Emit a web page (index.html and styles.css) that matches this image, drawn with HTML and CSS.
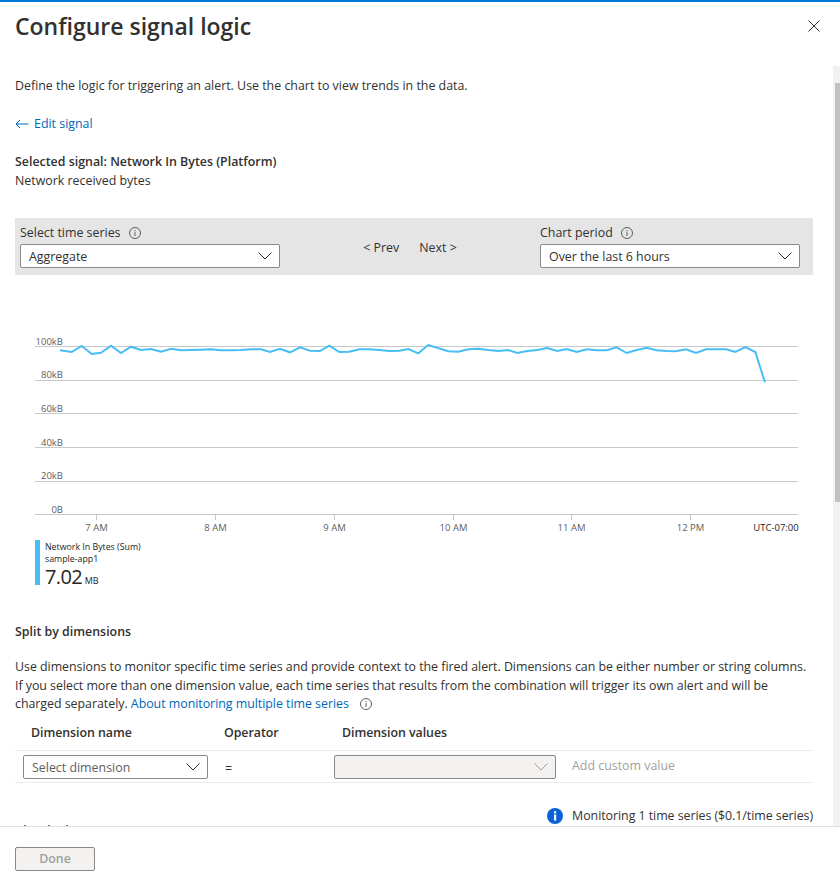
FILE: index.html
```html
<!DOCTYPE html>
<html lang="en">
<head>
    <meta charset="UTF-8">
    <meta name="viewport" content="width=device-width, initial-scale=1.0">
    <title>Configure signal logic</title>
    <link rel="stylesheet" href="styles.css">
</head>
<body>
    <div class="blade">
        <header class="blade-header">
            <h1>Configure signal logic</h1>
            <button class="close" aria-label="Close">
                <svg width="12" height="12" viewBox="0 0 12 12"><path d="M0.5 0.5 L11.5 11.5 M11.5 0.5 L0.5 11.5" stroke="#323130" stroke-width="1" fill="none"/></svg>
            </button>
        </header>
        <div class="blade-main">
            <div class="content">
                <p class="intro">Define the logic for triggering an alert. Use the chart to view trends in the data.</p>
                <a class="back-link">
                    <svg width="14" height="10" viewBox="0 0 14 10"><path d="M13.5 5 H1 M5 1 L1 5 L5 9" stroke="#0067b8" stroke-width="1" fill="none"/></svg>
                    Edit signal
                </a>
                <div class="signal">
                    <div class="strong">Selected signal: Network In Bytes (Platform)</div>
                    <div>Network received bytes</div>
                </div>
                <div class="toolbar">
                    <div class="field field-wide">
                        <label>Select time series
                            <svg class="info" width="12" height="12" viewBox="0 0 12 12"><circle cx="6" cy="6" r="5.5" stroke="#605e5c" fill="none"/><path d="M6 5.2 V9 M6 3 V4.2" stroke="#605e5c" fill="none"/></svg>
                        </label>
                        <div class="select">Aggregate
                            <svg width="14" height="8" viewBox="0 0 14 8"><path d="M0.5 0.5 L7 7 L13.5 0.5" stroke="#323130" fill="none"/></svg>
                        </div>
                    </div>
                    <div class="pager">
                        <span>&lt;&nbsp;Prev</span>
                        <span>Next&nbsp;&gt;</span>
                    </div>
                    <div class="field field-wide">
                        <label>Chart period
                            <svg class="info" width="12" height="12" viewBox="0 0 12 12"><circle cx="6" cy="6" r="5.5" stroke="#605e5c" fill="none"/><path d="M6 5.2 V9 M6 3 V4.2" stroke="#605e5c" fill="none"/></svg>
                        </label>
                        <div class="select">Over the last 6 hours
                            <svg width="14" height="8" viewBox="0 0 14 8"><path d="M0.5 0.5 L7 7 L13.5 0.5" stroke="#323130" fill="none"/></svg>
                        </div>
                    </div>
                </div>

                <svg class="chart" width="800" height="210" viewBox="0 330 800 210">
                    <g class="grid">
                        <path d="M35 346.5 H798 M35 380.5 H798 M35 413.5 H798 M35 447.5 H798 M35 481.5 H798 M35 514.5 H798"/>
                        <path d="M96.5 515 V520 M215.5 515 V520 M334.5 515 V520 M453.5 515 V520 M571.5 515 V520 M690.5 515 V520"/>
                    </g>
                    <g class="y-labels">
                        <text x="63" y="345">100kB</text>
                        <text x="63" y="378">80kB</text>
                        <text x="63" y="412">60kB</text>
                        <text x="63" y="446">40kB</text>
                        <text x="63" y="479">20kB</text>
                        <text x="63" y="513">0B</text>
                    </g>
                    <g class="x-labels">
                        <text x="96.5" y="531">7 AM</text>
                        <text x="215.5" y="531">8 AM</text>
                        <text x="334.5" y="531">9 AM</text>
                        <text x="453.5" y="531">10 AM</text>
                        <text x="571.5" y="531">11 AM</text>
                        <text x="690.5" y="531">12 PM</text>
                        <text class="tz" x="776" y="531">UTC-07:00</text>
                    </g>
                    <polyline class="series" points="60,350.3 71.7,352 81.7,346 91.7,354 101,352.7 111,345.7 121,353 131,346.7 141,350 151,349 161,351.7 171,348.7 181,350.3 191,350 201,349.7 211,349.3 221,350.3 231,350.3 241,350 251,349.3 261,349.3 270,352 280,348.7 290,352.3 300,347.3 310,350.7 320,351 329.3,345.7 339.3,352 349.3,351.7 359.3,349.3 369.3,349.3 379.3,350 389.3,351 399.3,350.7 408.3,349 418.3,353.3 428.3,345 448.3,351.3 458.3,351.7 468.3,349.3 478.3,348.7 488.3,350 498.3,351 508.3,350 517.3,353 527.3,351 537.3,350 547.3,348 557.3,351 566.7,349 576.7,352 586.7,349.3 596.7,350.3 606.7,350.3 616.7,347.3 626.7,353 636.7,350 646.7,347.7 656.7,350.3 666.7,351 676,351.3 686,349.3 696,353 706,349.3 716,349.3 726,349.3 735.3,352 745.3,347 755.3,352 765,382.3"/>
                </svg>

                <div class="legend">
                    <div class="legend-name">Network In Bytes (Sum)</div>
                    <div class="legend-name">sample-app1</div>
                    <div class="legend-value">7.02 <small>MB</small></div>
                </div>

                <h2>Split by dimensions</h2>
                <p class="dim-text">Use dimensions to monitor specific time series and provide context to the fired alert. Dimensions can be either number or string columns. If you select more than one dimension value, each time series that results from the combination will trigger its own alert and will be charged separately. <a>About monitoring multiple time series</a>
                    <svg class="info info-link" width="12" height="12" viewBox="0 0 12 12"><circle cx="6" cy="6" r="5.5" stroke="#605e5c" fill="none"/><path d="M6 5.2 V9 M6 3 V4.2" stroke="#605e5c" fill="none"/></svg>
                </p>

                <div class="dim-head">
                    <span class="col-name">Dimension name</span>
                    <span class="col-op">Operator</span>
                    <span>Dimension values</span>
                </div>
                <div class="dim-row">
                    <div class="select select-dim">Select dimension
                        <svg width="14" height="8" viewBox="0 0 14 8"><path d="M0.5 0.5 L7 7 L13.5 0.5" stroke="#323130" fill="none"/></svg>
                    </div>
                    <span class="equals">=</span>
                    <div class="select select-off">
                        <svg width="14" height="8" viewBox="0 0 14 8"><path d="M0.5 0.5 L7 7 L13.5 0.5" stroke="#a19f9d" fill="none"/></svg>
                    </div>
                    <span class="custom">Add custom value</span>
                </div>

                <div class="monitor">
                    <svg width="16" height="16" viewBox="0 0 16 16"><circle cx="8" cy="8" r="8" fill="#0b62d6"/><rect x="7" y="6.5" width="2.2" height="6" fill="#fff"/><rect x="7" y="3.2" width="2.2" height="2.2" fill="#fff"/></svg>
                    <span>Monitoring 1 time series ($0.1/time series)</span>
                </div>
                <h2 class="alert-logic">Alert logic</h2>
            </div>
            <div class="scrollbar"><div class="thumb"></div></div>
        </div>
        <footer class="blade-footer">
            <button class="done" disabled>Done</button>
        </footer>
    </div>
</body>
</html>
```

FILE: styles.css
```css
html, body { margin: 0; padding: 0; height: 100%; background: #fff; }
body { font-family: "Open Sans", "Noto Sans", sans-serif; font-size: 12.4px; color: #323130; }
.blade { height: 885px; display: flex; flex-direction: column; border-top: 2px solid #0078d4; box-sizing: border-box; overflow: hidden; }

.blade-header { height: 64px; flex: none; display: flex; justify-content: space-between; padding: 8px 20px 0 15px; box-sizing: border-box; }
.blade-header h1 { margin: 0; font-size: 23px; line-height: 32px; font-weight: 600; }
.close { background: none; border: 0; padding: 0; height: 32px; display: flex; align-items: center; }

.blade-main { flex: 1; display: flex; min-height: 0; }
.content { flex: 1; overflow: hidden; padding: 11px 20px 0 15px; }

.intro { margin: 0; line-height: 18px; }
.back-link { display: flex; align-items: center; gap: 5px; margin-top: 20px; line-height: 18px; color: #0067b8; }
.signal { margin-top: 19px; line-height: 19px; }
.strong { font-weight: 600; }

.toolbar { margin-top: 28px; height: 57px; background: #e5e5e5; display: flex; justify-content: space-between; padding: 5px 13px 0 5px; box-sizing: border-box; }
.field-wide { width: 260px; }
.field label { display: flex; align-items: center; gap: 8px; height: 19px; padding-bottom: 2px; }
.select { height: 24px; border: 1px solid #8a8886; border-radius: 2px; background: #fff; display: flex; align-items: center; justify-content: space-between; padding: 0 7px 0 8px; box-sizing: border-box; }
.pager { display: flex; gap: 20px; padding-top: 16px; }

.chart { display: block; margin: 55px 0 0 -15px; }
.grid path { stroke: #c8c8c8; stroke-width: 1; fill: none; }
.y-labels text { font-size: 9.5px; fill: #605e5c; text-anchor: end; }
.x-labels text { font-size: 9.5px; fill: #605e5c; text-anchor: middle; }
.x-labels .tz { fill: #252423; }
.series { fill: none; stroke: #47bdf5; stroke-width: 2; }

.legend { margin: 0 0 0 20px; border-left: 5px solid #47bdf5; padding: 2px 0 0 5px; height: 45px; box-sizing: border-box; }
.legend-name { font-size: 8.8px; line-height: 11.5px; color: #252423; }
.legend-value { font-size: 20px; line-height: 23px; font-weight: 400; letter-spacing: -0.6px; color: #252423; }
.legend-value small { font-size: 9px; letter-spacing: 0; margin-left: -2px; }

h2 { margin: 38px 0 0; font-size: 12.4px; line-height: 18px; font-weight: 600; }
.dim-text { margin: 17px 0 0; line-height: 18.5px; width: 800px; letter-spacing: -0.03px; }
.dim-text a { color: #0067b8; }
.info-link { margin-left: 8px; vertical-align: -2px; }

.dim-head { display: flex; height: 37px; padding-top: 1px; align-items: center; font-weight: 600; letter-spacing: -0.05px; border-bottom: 1px solid #edebe9; width: 798px; box-sizing: border-box; }
.col-name { margin-left: 16px; width: 193px; }
.col-op { width: 118px; }
.dim-row { display: flex; height: 32px; padding-top: 1px; align-items: center; border-bottom: 1px solid #edebe9; width: 798px; box-sizing: border-box; }
.select-dim { width: 185px; margin-left: 8px; padding-top: 1px; color: #605e5c; }
.equals { margin: 3px 0 0 17px; width: 109px; }
.select-off { width: 222px; background: #f3f2f1; justify-content: flex-end; }
.custom { margin-left: 16px; color: #a19f9d; margin-bottom: 3px; }

.monitor { display: flex; justify-content: flex-end; align-items: center; gap: 9px; height: 12px; margin-top: 27px; width: 798px; letter-spacing: -0.05px; }
h2.alert-logic { margin: 0; }

.scrollbar { width: 7px; flex: none; background: #f1f1f1; padding-top: 17px; box-sizing: border-box; }
.thumb { margin-left: 2px; height: 419px; background: #c1c1c1; }

.blade-footer { height: 59px; flex: none; border-top: 1px solid #e1dfdd; padding: 20px 0 0 15px; box-sizing: border-box; }
.done { width: 80px; height: 24px; background: #f3f2f1; border: 1px solid #8a8886; border-radius: 2px; color: #a19f9d; font: 600 12.4px "Open Sans", sans-serif; padding: 0 0 2px; }
```
